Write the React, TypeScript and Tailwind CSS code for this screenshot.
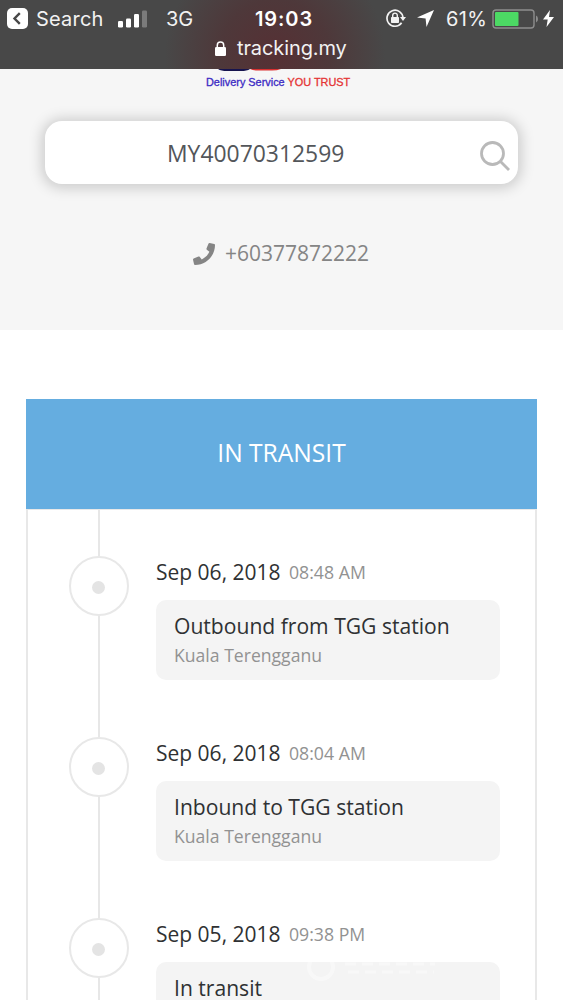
import React from "react";
import { FaPhone } from "react-icons/fa";

const events = [
  { date: "Sep 06, 2018", time: "08:48 AM", title: "Outbound from TGG station", place: "Kuala Terengganu" },
  { date: "Sep 06, 2018", time: "08:04 AM", title: "Inbound to TGG station", place: "Kuala Terengganu" },
  { date: "Sep 05, 2018", time: "09:38 PM", title: "In transit", place: "" },
];

function StatusBar() {
  return (
    <header className="h-[69px] shrink-0 bg-[#484848] bg-[radial-gradient(ellipse_110px_110px_at_275px_55px,#563034_0%,#4e383a_50%,#484848_100%)] font-['Inter','Roboto',sans-serif] text-[#f2f2f2]">
      <div className="flex h-[37px] items-center pl-[7px]">
        <svg className="mr-2 shrink-0" width="21" height="21" viewBox="0 0 21 21">
          <rect width="21" height="21" rx="5" fill="#fff" />
          <path d="M12.800 5.200 7.500 10.500l5.300 5.300" fill="none" stroke="#484848" strokeWidth="2.400" />
        </svg>
        <span className="w-[82px] shrink-0 text-[20px] tracking-[0.2px]">Search</span>
        <svg className="mr-[19px] shrink-0" width="29" height="18" viewBox="0 0 29 18">
          <rect x="0" y="11" width="5" height="6.500" rx="1.200" fill="#fff" />
          <rect x="8" y="8.500" width="5" height="9" rx="1.200" fill="#fff" />
          <rect x="16" y="4" width="5" height="13.500" rx="1.200" fill="#fff" />
          <rect x="24" y="0.500" width="5" height="17" rx="1.200" fill="#7b7b7b" />
        </svg>
        <span className="w-[89px] shrink-0 text-[20px]">3G</span>
        <span className="w-[131px] shrink-0 text-[20px] font-semibold tracking-[0.9px] text-white">19:03</span>
        <svg className="mr-[11px] shrink-0" width="20" height="19" viewBox="0 0 20 19">
          <path d="M15.600 13.800A8 8 0 1 1 17 9" fill="none" stroke="#f2f2f2" strokeWidth="1.700" />
          <path d="M14 8h6l-3 4z" fill="#f2f2f2" />
          <rect x="5" y="8" width="8" height="6" rx=".7" fill="#f2f2f2" />
          <path d="M6.700 8.500V6.400a2.300 2.300 0 0 1 4.600 0v2.100" fill="none" stroke="#f2f2f2" strokeWidth="1.400" />
        </svg>
        <svg className="mr-3 shrink-0" width="17" height="17" viewBox="0 0 17 17">
          <path d="M17 0 9.500 17 8.600 8.500 0 7.500z" fill="#fff" />
        </svg>
        <span className="w-[46px] shrink-0 text-[20px] tracking-[0.4px]">61%</span>
        <svg className="mr-1 shrink-0" width="47" height="20" viewBox="0 0 47 20">
          <rect x="1" y="1" width="41" height="18" rx="3" fill="none" stroke="#8d8d8d" strokeWidth="1.400" />
          <rect x="3" y="3" width="23.500" height="14" rx="1" fill="#4cd964" />
          <path d="M44 6.500q2 .5 2 3.500t-2 3.500z" fill="#8d8d8d" />
        </svg>
        <svg className="shrink-0" width="11" height="17" viewBox="0 0 11 17">
          <path d="M7 0 0 9.500h4.700L3.500 17 11 7H6z" fill="#fff" />
        </svg>
      </div>
      <div className="flex h-[22px] items-center pl-[215px]">
        <svg className="mr-[11px] shrink-0" width="11" height="15" viewBox="0 0 11 15">
          <rect y="6" width="11" height="9" rx="1.200" fill="#fff" />
          <path d="M2.300 7V4.200a3.200 3.200 0 0 1 6.400 0V7" fill="none" stroke="#fff" strokeWidth="1.500" />
        </svg>
        <span className="text-[20px] leading-[22px] tracking-[-0.1px]">tracking.my</span>
      </div>
    </header>
  );
}

function Lookup() {
  return (
    <section className="h-[261px] shrink-0 bg-[#f6f6f6]">
      <svg className="ml-[216px] block" width="70" height="3" viewBox="0 0 70 3">
        <path d="M2 0h32q-3 2-9 2H11q-6 0-9-2" fill="#17144e" />
        <path d="M34 0h31q-4 1.500-9 1.500H42q-5 0-8-1.500" fill="#d93030" />
      </svg>
      <p className="ml-[206px] mt-[3px] whitespace-nowrap font-['Liberation_Sans',sans-serif] text-[10.900px] leading-[14px] text-[#3c2bc4] [-webkit-text-stroke:0.3px]">
        Delivery Service <span className="text-[#e53434]">YOU TRUST</span>
      </p>
      <div className="ml-[45px] mt-8 flex h-[63px] w-[473px] items-center rounded-[17px] bg-white shadow-[0_1px_14px_3px_rgba(0,0,0,0.18)]">
        <span className="ml-[122px] mt-[2px] w-[313px] text-[22.900px] leading-[34px] text-[#53565a]">MY40070312599</span>
        <svg className="mt-[7px] shrink-0" width="31" height="31" viewBox="0 0 31 31" fill="none" stroke="#b9b9b9" strokeWidth="2.800">
          <circle cx="12.500" cy="12.500" r="11" />
          <path d="m20.500 20.500 8.500 8.500" />
        </svg>
      </div>
      <div className="ml-[193px] mt-[54px] flex h-8 items-center text-[#858585]">
        <FaPhone className="mr-[10px] size-[22px]" />
        <span className="text-[21px]">+60377872222</span>
      </div>
    </section>
  );
}

function TimelineEvent({ event }: { event: (typeof events)[number] }) {
  return (
    <li className="flex h-[181px] shrink-0">
      <div className="ml-10 flex w-[61px] shrink-0 flex-col items-center">
        <div className="h-[46px] w-[2px] shrink-0 bg-[#e7e7e7]" />
        <div className="flex size-[60px] shrink-0 items-center justify-center rounded-full border-2 border-[#e8e8e8] bg-white">
          <div className="mt-[3px] size-[13px] rounded-full bg-[#e4e4e4]" />
        </div>
        <div className="w-[2px] grow bg-[#e7e7e7]" />
      </div>
      <div className="ml-[27px] w-[344px] pt-[47px]">
        <div className="flex h-[30px] whitespace-nowrap text-[#2f3133]">
          <span className="w-[133px] text-[21px] leading-[30px]">{event.date}</span>
          <time className="text-[17.700px] leading-[31px] text-[#929292]">{event.time}</time>
        </div>
        <div className="mt-[13px] h-20 rounded-[10px] bg-[#f4f4f4] pl-[18px] pt-[11px]">
          <p className="whitespace-nowrap text-[21.100px] leading-[30px] text-[#2f3133]">{event.title}</p>
          <p className="whitespace-nowrap text-[17.600px] leading-[29px] text-[#929292]">{event.place}</p>
        </div>
      </div>
    </li>
  );
}

function Watermark() {
  return (
    <svg className="absolute left-[300px] top-[950px] opacity-40" width="150" height="34" viewBox="0 0 150 34">
      <circle cx="21" cy="17" r="12" fill="none" stroke="#fff" strokeWidth="4" />
      <path d="M45 14h90M48 22h86" stroke="#fff" strokeWidth="3" strokeDasharray="11 6" />
    </svg>
  );
}

export default function App() {
  return (
    <main className="relative flex h-[1000px] w-[563px] flex-col overflow-hidden bg-white font-['Open_Sans','Noto_Sans',sans-serif]">
      <StatusBar />
      <Lookup />
      <section className="ml-[26px] mt-[69px] w-[511px] shrink-0">
        <h1 className="flex h-[110px] items-center justify-center bg-[#65ade0] pb-px text-[24.600px] text-white">IN TRANSIT</h1>
        <ol className="flex flex-col border-x-2 border-t border-[#e8e8e8]">
          {events.map((event) => (
            <TimelineEvent key={event.date + event.time} event={event} />
          ))}
        </ol>
      </section>
      <Watermark />
    </main>
  );
}
